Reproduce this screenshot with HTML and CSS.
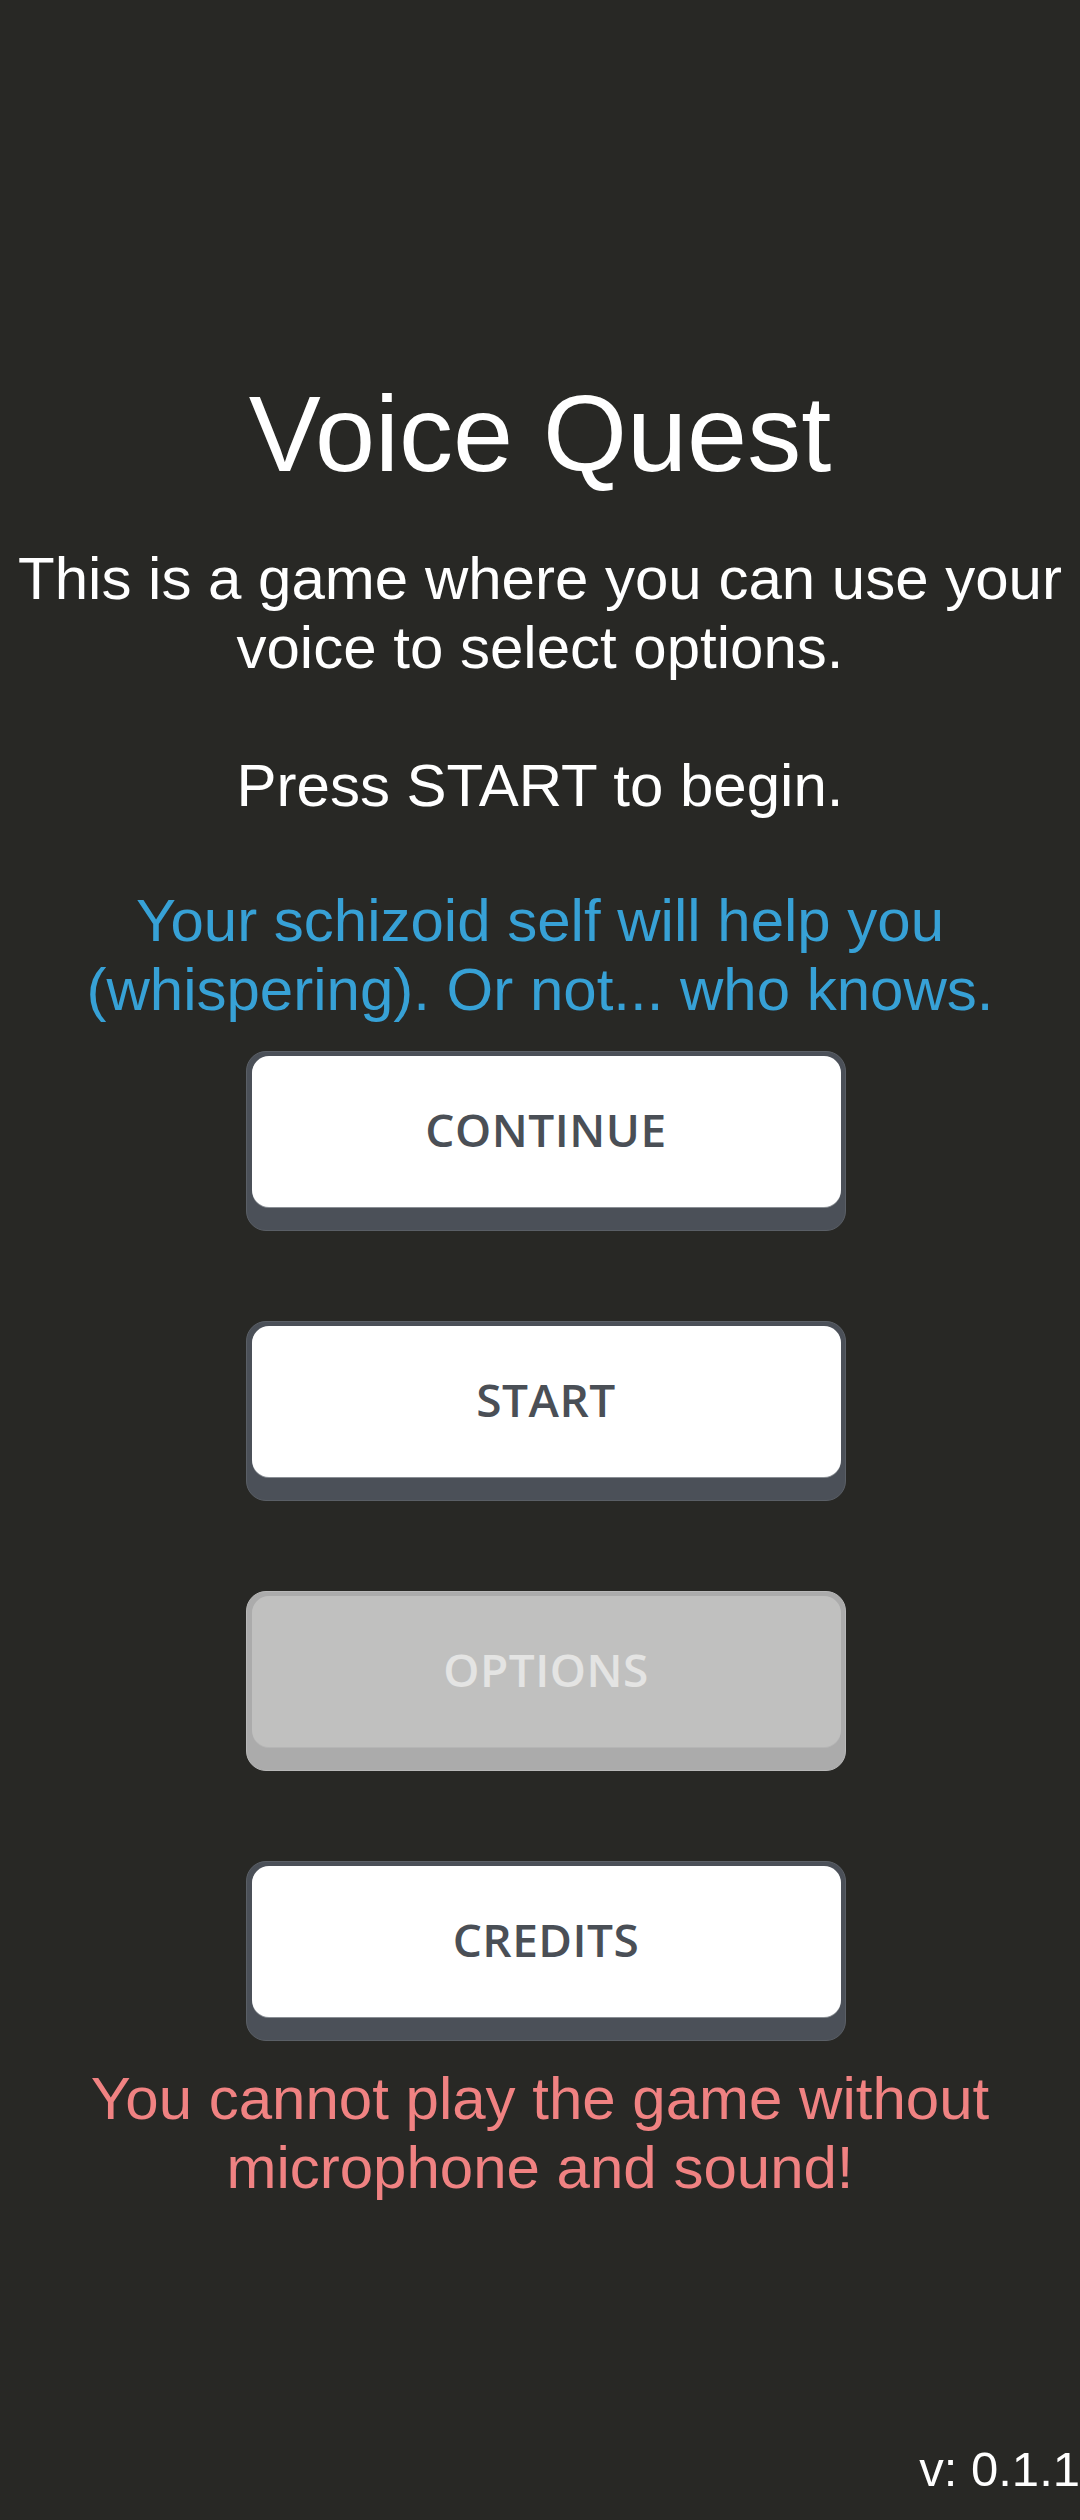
FILE: index.html
```html
<!DOCTYPE html>
<html>
<head>
<meta charset="utf-8">
<link rel="stylesheet" href="styles.css">
</head>
<body>
<div class="page">
  <main class="menu">
    <h1 class="title">Voice Quest</h1>
    <p class="intro">This is a game where you can use your voice to select options.<br><br>Press START to begin.</p>
    <p class="hint">Your schizoid self will help you (whispering). Or not... who knows.</p>
    <div class="buttons">
      <div class="btn"><div class="face">CONTINUE</div></div>
      <div class="btn"><div class="face">START</div></div>
      <div class="btn disabled"><div class="face">OPTIONS</div></div>
      <div class="btn"><div class="face">CREDITS</div></div>
    </div>
    <p class="warning">You cannot play the game without microphone and sound!</p>
  </main>
  <div class="version">v: 0.1.1</div>
</div>
</body>
</html>
```
FILE: styles.css
```css
html, body {
  margin: 0;
  padding: 0;
  background: #282825;
}
.page {
  min-height: 2520px;
  display: flex;
  flex-direction: column;
  font-family: "Liberation Sans", Arial, sans-serif;
  color: #ffffff;
}
.menu {
  display: flex;
  flex-direction: column;
  align-items: center;
  text-align: center;
  padding-top: 371px;
}
.title {
  margin: 0;
  font-size: 108px;
  font-weight: normal;
  line-height: normal;
}
.intro {
  margin: 48px 0 0 0;
  font-size: 60px;
  line-height: 69px;
}
.hint {
  margin: 66px 0 0 0;
  font-size: 60px;
  line-height: 69px;
  color: #37a1d6;
  padding: 0 40px;
}
.buttons {
  margin-top: 27px;
  margin-left: 11px;
  display: flex;
  flex-direction: column;
  gap: 90px;
}
.btn {
  width: 600px;
  height: 180px;
  box-sizing: border-box;
  background: #4b5058;
  border: 1px solid #5a5f66;
  border-radius: 20px;
  padding: 4px 4px 23px 5px;
}
.face {
  height: 100%;
  box-sizing: border-box;
  padding-bottom: 5px;
  background: #ffffff;
  border-radius: 17px;
  display: flex;
  align-items: center;
  justify-content: center;
  font-family: "Open Sans", "Noto Sans", sans-serif;
  font-weight: 600;
  font-size: 46px;
  letter-spacing: 0.5px;
  color: #4a4f56;
  box-shadow: 0 1px 0 #8a8f95;
}
.btn.disabled {
  background: #ababab;
  border-color: #b8b8b8;
}
.btn.disabled .face {
  background: #c0c0bf;
  color: #e4e4e3;
  box-shadow: 0 1px 0 #b5b5b5;
}
.warning {
  margin: 23px 0 0 0;
  font-size: 60px;
  line-height: 69px;
  color: #f08282;
  padding: 0 80px;
}
.version {
  margin-top: auto;
  align-self: flex-end;
  font-size: 49px;
  line-height: normal;
  padding-bottom: 23px;
}
```
